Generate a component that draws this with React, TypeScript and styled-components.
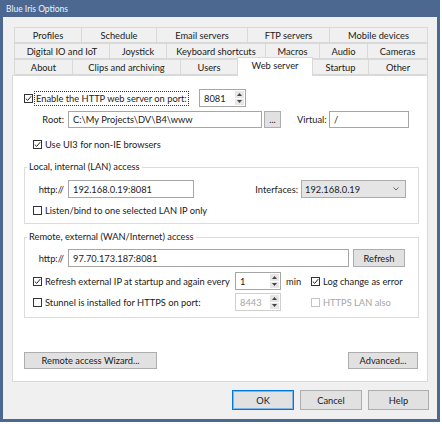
import React from "react";
import styled, { createGlobalStyle } from "styled-components";

const GlobalStyle = createGlobalStyle`
  html, body {
    margin: 0;
    padding: 0;
    background: #fff;
  }
  body {
    font-family: Lato, "Liberation Sans", sans-serif;
    font-size: 9.3px;
    color: #1a1a1a;
  }
  * {
    box-sizing: border-box;
  }
`;

const Window = styled.div`
  width: 440px;
  height: 422px;
  background: #4c6890;
  padding: 0 3px 3px 3px;
  display: flex;
  flex-direction: column;
`;

const TitleBar = styled.div`
  height: 17px;
  display: flex;
  align-items: center;
  padding-left: 3px;
  color: #eef2f8;
  font-size: 8.5px;
`;

const Client = styled.div`
  flex: 1;
  background: #f0f0f0;
  padding: 10px 9px 0 9px;
  display: flex;
  flex-direction: column;
`;

const TabRow = styled.div`
  display: flex;
  height: 16px;
  padding-left: 2px;
  align-items: flex-start;
`;

const Tab = styled.div<{ $w: number; $active?: boolean }>`
  width: ${(p) => p.$w}px;
  height: ${(p) => (p.$active ? 19 : 16)}px;
  margin-top: ${(p) => (p.$active ? -2 : 0)}px;
  margin-right: -1px;
  background: ${(p) => (p.$active ? "#fff" : "#f0f0f0")};
  border: 1px solid #d9d9d9;
  border-bottom: ${(p) => (p.$active ? "none" : "1px solid #d9d9d9")};
  display: flex;
  align-items: ${(p) => (p.$active ? "flex-start" : "center")};
  padding-top: ${(p) => (p.$active ? 2 : 0)}px;
  justify-content: center;
  position: relative;
  z-index: ${(p) => (p.$active ? 2 : 0)};
  white-space: nowrap;
`;

const Panel = styled.div`
  height: 307px;
  background: #fff;
  border: 1px solid #d9d9d9;
  padding: 13px 8px 0 11px;
  display: flex;
  flex-direction: column;
`;

const Row = styled.div<{ $h?: number; $mt?: number; $pl?: number }>`
  display: flex;
  align-items: center;
  height: ${(p) => p.$h ?? 18}px;
  margin-top: ${(p) => p.$mt ?? 0}px;
  padding-left: ${(p) => p.$pl ?? 0}px;
`;

const FieldLabel = styled.span<{ $w: number; $mr?: number; $ml?: number }>`
  width: ${(p) => p.$w}px;
  margin-right: ${(p) => p.$mr ?? 4}px;
  margin-left: ${(p) => p.$ml ?? 0}px;
  text-align: right;
  white-space: nowrap;
`;

const TextBox = styled.div<{ $w: number }>`
  width: ${(p) => p.$w}px;
  height: 100%;
  border: 1px solid #a6a6a6;
  background: #fff;
  display: flex;
  align-items: center;
  padding-left: 4px;
  white-space: nowrap;
  overflow: hidden;
`;

const Button = styled.div<{ $w: number; $default?: boolean }>`
  width: ${(p) => p.$w}px;
  height: 100%;
  background: #e1e1e1;
  border: 1px solid ${(p) => (p.$default ? "#0078d7" : "#adadad")};
  box-shadow: ${(p) => (p.$default ? "inset 0 0 0 1px #7fb6e6" : "none")};
  display: flex;
  align-items: center;
  justify-content: center;
  white-space: nowrap;
`;

const CheckWrap = styled.div<{ $w?: number; $disabled?: boolean }>`
  display: flex;
  align-items: center;
  gap: 3px;
  width: ${(p) => (p.$w ? `${p.$w}px` : "auto")};
  color: ${(p) => (p.$disabled ? "#a6a6a6" : "#1a1a1a")};
  white-space: nowrap;
`;

const Box = styled.span<{ $disabled?: boolean }>`
  width: 9px;
  height: 9px;
  border: 1px solid ${(p) => (p.$disabled ? "#c4c4c4" : "#333")};
  background: #fff;
  display: flex;
  align-items: center;
  justify-content: center;
  flex: none;
`;

const FocusText = styled.span`
  border: 1px dotted #333;
  padding: 1px 1px;
  margin-left: -2px;
`;

const Spin = styled.div<{ $w: number; $disabled?: boolean }>`
  width: ${(p) => p.$w}px;
  height: 100%;
  border: 1px solid ${(p) => (p.$disabled ? "#cfcfcf" : "#a6a6a6")};
  background: #fff;
  display: flex;
  color: ${(p) => (p.$disabled ? "#a6a6a6" : "#1a1a1a")};
`;

const SpinText = styled.div`
  flex: 1;
  display: flex;
  align-items: center;
  padding-left: 4px;
`;

const SpinButtons = styled.div`
  width: 10px;
  padding: 1px 1px 1px 0;
  display: flex;
  flex-direction: column;
  gap: 1px;
`;

const SpinHalf = styled.div`
  flex: 1;
  background: #e6e6e6;
  display: flex;
  align-items: center;
  justify-content: center;
`;

const Select = styled.div<{ $w: number }>`
  width: ${(p) => p.$w}px;
  height: 100%;
  background: #e5e5e5;
  border: 1px solid #acacac;
  display: flex;
  align-items: center;
  justify-content: space-between;
  padding: 0 6px 0 3px;
`;

const Group = styled.fieldset<{ $mt: number }>`
  margin: ${(p) => p.$mt}px 0 0 0;
  border: 1px solid #dcdcdc;
  padding: 0 12px 6px 0;
  min-width: 0;
`;

const Legend = styled.legend`
  margin-left: 2px;
  padding: 0 2px;
  line-height: 12px;
  white-space: nowrap;
`;

const CheckGrid = styled.div`
  display: grid;
  grid-template-columns: 202px 46px 30px auto;
  grid-auto-rows: 18px;
  row-gap: 3px;
  margin-top: 5px;
  padding-left: 8px;
  align-items: center;
`;

const MinLabel = styled.span`
  padding-left: 5px;
`;

const Footer = styled.div`
  display: flex;
  justify-content: flex-end;
  gap: 6px;
  height: 20px;
  margin-top: 8px;
  margin-right: -1px;
`;

const Check = ({
  checked,
  disabled,
}: {
  checked?: boolean;
  disabled?: boolean;
}) => (
  <Box $disabled={disabled}>
    {checked && (
      <svg width="7" height="7" viewBox="0 0 7 7">
        <path d="M0.8 3.6 L2.7 5.4 L6.2 1.2" fill="none" stroke="#222" strokeWidth="1" />
      </svg>
    )}
  </Box>
);

const Arrow = ({ up }: { up?: boolean }) => (
  <svg width="5" height="3" viewBox="0 0 5 3">
    <path d={up ? "M0 3 L2.5 0 L5 3 Z" : "M0 0 L2.5 3 L5 0 Z"} fill="#444" />
  </svg>
);

const SpinBox = ({
  value,
  w,
  disabled,
}: {
  value: string;
  w: number;
  disabled?: boolean;
}) => (
  <Spin $w={w} $disabled={disabled}>
    <SpinText>{value}</SpinText>
    <SpinButtons>
      <SpinHalf>
        <Arrow up />
      </SpinHalf>
      <SpinHalf>
        <Arrow />
      </SpinHalf>
    </SpinButtons>
  </Spin>
);

const tabRows: { label: string; w: number; active?: boolean }[][] = [
  [
    { label: "Profiles", w: 68 },
    { label: "Schedule", w: 76 },
    { label: "Email servers", w: 92 },
    { label: "FTP servers", w: 83 },
    { label: "Mobile devices", w: 99 },
  ],
  [
    { label: "Digital IO and IoT", w: 96 },
    { label: "Joystick", w: 58 },
    { label: "Keyboard shortcuts", w: 100 },
    { label: "Macros", w: 55 },
    { label: "Audio", w: 49 },
    { label: "Cameras", w: 61 },
  ],
  [
    { label: "About", w: 59 },
    { label: "Clips and archiving", w: 109 },
    { label: "Users", w: 58 },
    { label: "Web server", w: 76, active: true },
    { label: "Startup", w: 57 },
    { label: "Other", w: 60 },
  ],
];

export default function App() {
  return (
    <>
      <GlobalStyle />
      <Window>
        <TitleBar>Blue Iris Options</TitleBar>
        <Client>
          {tabRows.map((row, i) => (
            <TabRow key={i}>
              {row.map((t) => (
                <Tab key={t.label} $w={t.w} $active={t.active}>
                  {t.label}
                </Tab>
              ))}
            </TabRow>
          ))}
          <Panel>
            <Row>
              <CheckWrap $w={175}>
                <Check checked />
                <FocusText>Enable the HTTP web server on port:</FocusText>
              </CheckWrap>
              <SpinBox value="8081" w={47} />
            </Row>
            <Row $h={17} $mt={4}>
              <FieldLabel $w={40}>Root:</FieldLabel>
              <TextBox $w={194}>C:\My Projects\DV\B4\www</TextBox>
              <Button $w={17} style={{ marginLeft: 2 }}>
                ...
              </Button>
              <FieldLabel $w={28} $ml={16}>
                Virtual:
              </FieldLabel>
              <TextBox $w={80}>/</TextBox>
            </Row>
            <Row $h={14} $mt={9} $pl={9}>
              <CheckWrap>
                <Check checked />
                Use UI3 for non-IE browsers
              </CheckWrap>
            </Row>

            <Group $mt={10}>
              <Legend>Local, internal (LAN) access</Legend>
              <Row $mt={7}>
                <FieldLabel $w={39}>http://</FieldLabel>
                <TextBox $w={126}>192.168.0.19:8081</TextBox>
                <FieldLabel $w={46} $mr={3} style={{ marginLeft: "auto" }}>
                  Interfaces:
                </FieldLabel>
                <Select $w={105}>
                  192.168.0.19
                  <svg width="6" height="4" viewBox="0 0 6 4">
                    <path d="M0.5 0.5 L3 3 L5.5 0.5" fill="none" stroke="#555" strokeWidth="0.9" />
                  </svg>
                </Select>
              </Row>
              <Row $h={14} $mt={5} $pl={8}>
                <CheckWrap>
                  <Check />
                  Listen/bind to one selected LAN IP only
                </CheckWrap>
              </Row>
            </Group>

            <Group $mt={7}>
              <Legend>Remote, external (WAN/Internet) access</Legend>
              <Row $mt={6}>
                <FieldLabel $w={39}>http://</FieldLabel>
                <TextBox $w={281}>97.70.173.187:8081</TextBox>
                <Button $w={52} style={{ marginLeft: 4 }}>
                  Refresh
                </Button>
              </Row>
              <CheckGrid>
                <CheckWrap>
                  <Check checked />
                  Refresh external IP at startup and again every
                </CheckWrap>
                <SpinBox value="1" w={46} />
                <MinLabel>min</MinLabel>
                <CheckWrap>
                  <Check checked />
                  Log change as error
                </CheckWrap>
                <CheckWrap>
                  <Check />
                  Stunnel is installed for HTTPS on port:
                </CheckWrap>
                <SpinBox value="8443" w={46} disabled />
                <span />
                <CheckWrap $disabled>
                  <Check disabled />
                  HTTPS LAN also
                </CheckWrap>
              </CheckGrid>
            </Group>

            <Row $h={17} $mt={34} style={{ justifyContent: "space-between", paddingRight: 1 }}>
              <Button $w={133}>Remote access Wizard...</Button>
              <Button $w={70}>Advanced...</Button>
            </Row>
          </Panel>
          <Footer>
            <Button $w={62} $default>
              OK
            </Button>
            <Button $w={62}>Cancel</Button>
            <Button $w={61}>Help</Button>
          </Footer>
        </Client>
      </Window>
    </>
  );
}
